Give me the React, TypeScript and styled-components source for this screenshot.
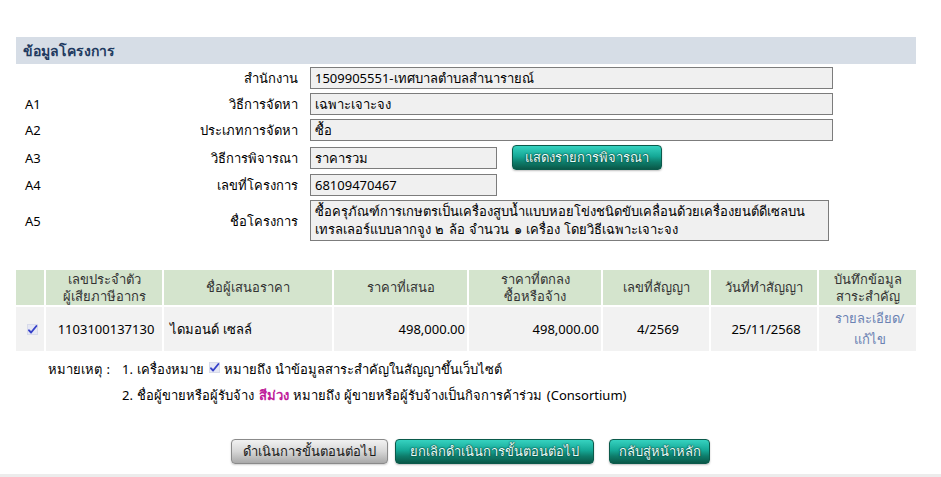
import styled, { createGlobalStyle } from 'styled-components';

const GlobalStyle = createGlobalStyle`
  html, body {
    margin: 0;
    padding: 0;
    background: #ffffff;
  }
  body {
    font-family: Tahoma, "Noto Sans", "DejaVu Sans", sans-serif;
    font-size: 13px;
    line-height: 18px;
    word-spacing: 1px;
    color: #000000;
  }
`;

const Page = styled.div`
  width: 941px;
  height: 477px;
  box-sizing: border-box;
  padding: 37px 25px 0 16px;
  overflow: hidden;
  border-bottom: 3px solid #ececec;
`;

const SectionBar = styled.div`
  height: 27px;
  background: #d6dde6;
  display: flex;
  align-items: center;
  padding-left: 7px;
  font-size: 14px;
  font-weight: bold;
  color: #1f3a60;
`;

const Form = styled.div`
  display: flex;
  flex-direction: column;
  gap: 4px;
  margin-top: 3px;
`;

const Row = styled.div<{ $tall?: boolean }>`
  display: flex;
  align-items: center;
  min-height: ${(p) => (p.$tall ? '25px' : '22px')};
`;

const Code = styled.div`
  width: 100px;
  padding-left: 9px;
`;

const Label = styled.div`
  width: 173px;
  text-align: right;
  margin-right: 12px;
`;

const Field = styled.div<{ $width: number; $multi?: boolean }>`
  box-sizing: border-box;
  width: ${(p) => p.$width}px;
  min-height: ${(p) => (p.$multi ? '41px' : '22px')};
  background: #f0f0f0;
  border: 1px solid #7c7c7c;
  padding: ${(p) => (p.$multi ? '1px 4px' : '0 4px')};
  line-height: ${(p) => (p.$multi ? '18px' : '20px')};
  white-space: ${(p) => (p.$multi ? 'normal' : 'nowrap')};
`;

const TealButton = styled.button<{ $width: number }>`
  box-sizing: border-box;
  width: ${(p) => p.$width}px;
  height: 25px;
  border: 1px solid #0b5a4b;
  border-radius: 4px;
  background: linear-gradient(to bottom, #36d2c0 0%, #15a896 45%, #0e7d6b 70%, #0a5848 100%);
  color: #e6fffb;
  text-shadow: 0 0 2px #05332a, 0 0 1px #05332a;
  font-family: inherit;
  font-size: 13px;
  word-spacing: 1px;
  padding: 0;
  cursor: pointer;
  box-shadow: 0 1px 2px rgba(0, 0, 0, 0.25);
`;

const GreyButton = styled.button<{ $width: number }>`
  box-sizing: border-box;
  width: ${(p) => p.$width}px;
  height: 25px;
  border: 1px solid #8a8a8a;
  border-radius: 4px;
  background: linear-gradient(to bottom, #f2f2f2 0%, #d6d6d6 50%, #a9a9a9 100%);
  color: #1a1a1a;
  font-family: inherit;
  font-size: 13px;
  padding: 0;
  cursor: pointer;
  box-shadow: 0 1px 2px rgba(0, 0, 0, 0.2);
`;

const InlineButton = styled.div`
  margin-left: 15px;
  display: flex;
`;

const Table = styled.table`
  margin: 27px -2px 0 -2px;
  border-collapse: separate;
  border-spacing: 2px;
  table-layout: fixed;
  width: 902px;
  font-size: 13px;
`;

const Th = styled.th<{ $w: number }>`
  box-sizing: border-box;
  width: ${(p) => p.$w}px;
  height: 35px;
  background: #d4e4cd;
  color: #333333;
  font-weight: normal;
  line-height: 17px;
  padding: 0 2px;
  text-align: center;
  vertical-align: middle;
`;

const Td = styled.td<{ $align?: 'left' | 'right' | 'center' }>`
  box-sizing: border-box;
  height: 44px;
  background: #f2f2f2;
  text-align: ${(p) => p.$align || 'center'};
  vertical-align: middle;
  padding: 0 2px 0 6px;
  line-height: 21px;
`;

const EditLink = styled.a`
  color: #6b82b3;
  text-decoration: none;
`;

const Notes = styled.div`
  display: grid;
  grid-template-columns: 74px 1fr;
  row-gap: 8px;
  margin: 7px 0 0 32px;
  line-height: 18px;
`;

const Purple = styled.span`
  color: #c01c9a;
  font-weight: bold;
`;

const Actions = styled.div`
  display: flex;
  justify-content: center;
  align-items: center;
  margin: 35px -25px 0 -16px;
  width: 941px;
`;

const Gap = styled.div<{ $w: number }>`
  width: ${(p) => p.$w}px;
`;

const CheckIcon = ({ raised }: { raised?: boolean }) => (
  <svg width="11" height="11" viewBox="0 0 11 11" style={{ verticalAlign: raised ? '1px' : '-1px' }}>
    <rect x="0.5" y="0.5" width="10" height="10" fill="#e6e8f4" stroke="#d8dbea" strokeWidth="1" />
    <path d="M2 6.3 L4.1 8.5 L9.4 2" stroke="#3641c9" strokeWidth="1.9" fill="none" strokeLinecap="round" strokeLinejoin="round" />
  </svg>
);

export default function App() {
  return (
    <>
      <GlobalStyle />
      <Page>
        <SectionBar>ข้อมูลโครงการ</SectionBar>
        <Form>
          <Row>
            <Code />
            <Label>สำนักงาน</Label>
            <Field $width={523}>1509905551-เทศบาลตำบลสำนารายณ์</Field>
          </Row>
          <Row>
            <Code>A1</Code>
            <Label>วิธีการจัดหา</Label>
            <Field $width={523}>เฉพาะเจาะจง</Field>
          </Row>
          <Row>
            <Code>A2</Code>
            <Label>ประเภทการจัดหา</Label>
            <Field $width={523}>ซื้อ</Field>
          </Row>
          <Row $tall>
            <Code>A3</Code>
            <Label>วิธีการพิจารณา</Label>
            <Field $width={187}>ราคารวม</Field>
            <InlineButton>
              <TealButton $width={150}>แสดงรายการพิจารณา</TealButton>
            </InlineButton>
          </Row>
          <Row>
            <Code>A4</Code>
            <Label>เลขที่โครงการ</Label>
            <Field $width={187}>68109470467</Field>
          </Row>
          <Row>
            <Code>A5</Code>
            <Label>ชื่อโครงการ</Label>
            <Field $width={519} $multi>
              ซื้อครุภัณฑ์การเกษตรเป็นเครื่องสูบน้ำแบบหอยโข่งชนิดขับเคลื่อนด้วยเครื่องยนต์ดีเซลบน
              เทรลเลอร์แบบลากจูง ๒ ล้อ จำนวน ๑ เครื่อง โดยวิธีเฉพาะเจาะจง
            </Field>
          </Row>
        </Form>

        <Table>
          <thead>
            <tr>
              <Th $w={28} />
              <Th $w={116}>เลขประจำตัว<br />ผู้เสียภาษีอากร</Th>
              <Th $w={168}>ชื่อผู้เสนอราคา</Th>
              <Th $w={133}>ราคาที่เสนอ</Th>
              <Th $w={132}>ราคาที่ตกลง<br />ซื้อหรือจ้าง</Th>
              <Th $w={106}>เลขที่สัญญา</Th>
              <Th $w={106}>วันที่ทำสัญญา</Th>
              <Th $w={97}>บันทึกข้อมูล<br />สาระสำคัญ</Th>
            </tr>
          </thead>
          <tbody>
            <tr>
              <Td><CheckIcon /></Td>
              <Td $align="center">1103100137130</Td>
              <Td $align="left">ไดมอนด์ เซลล์</Td>
              <Td $align="right">498,000.00</Td>
              <Td $align="right">498,000.00</Td>
              <Td>4/2569</Td>
              <Td>25/11/2568</Td>
              <Td><EditLink href="#">รายละเอียด/<br />แก้ไข</EditLink></Td>
            </tr>
          </tbody>
        </Table>

        <Notes>
          <span>หมายเหตุ :</span>
          <span>1. เครื่องหมาย <CheckIcon raised /> หมายถึง นำข้อมูลสาระสำคัญในสัญญาขึ้นเว็บไซต์</span>
          <span />
          <span>2. ชื่อผู้ขายหรือผู้รับจ้าง <Purple>สีม่วง</Purple> หมายถึง ผู้ขายหรือผู้รับจ้างเป็นกิจการค้าร่วม (Consortium)</span>
        </Notes>

        <Actions>
          <GreyButton $width={157}>ดำเนินการขั้นตอนต่อไป</GreyButton>
          <Gap $w={7} />
          <TealButton $width={199}>ยกเลิกดำเนินการขั้นตอนต่อไป</TealButton>
          <Gap $w={15} />
          <TealButton $width={101}>กลับสู่หน้าหลัก</TealButton>
        </Actions>
      </Page>
    </>
  );
}
